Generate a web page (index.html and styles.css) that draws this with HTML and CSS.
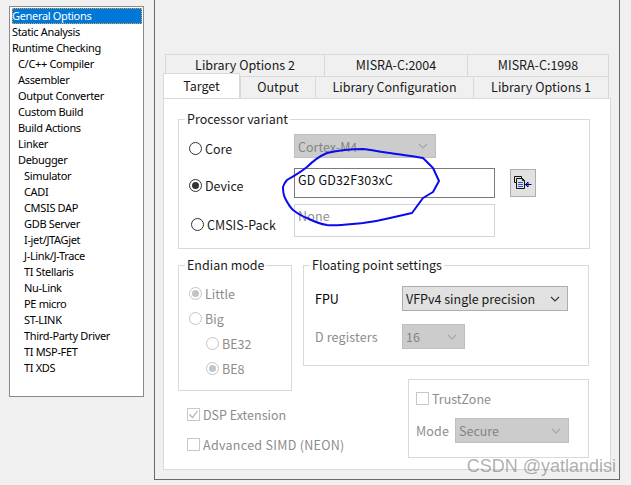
FILE: index.html
```html
<!DOCTYPE html>
<html lang="en">
<head>
<meta charset="utf-8">
<title>Options</title>
<link rel="stylesheet" href="styles.css">
</head>
<body>
<div class="app">
  <ul class="cats">
    <li class="cat sel"><span>General Options</span></li>
    <li class="cat">Static Analysis</li>
    <li class="cat">Runtime Checking</li>
    <li class="cat l1">C/C++ Compiler</li>
    <li class="cat l1">Assembler</li>
    <li class="cat l1">Output Converter</li>
    <li class="cat l1">Custom Build</li>
    <li class="cat l1">Build Actions</li>
    <li class="cat l1">Linker</li>
    <li class="cat l1">Debugger</li>
    <li class="cat l2">Simulator</li>
    <li class="cat l2">CADI</li>
    <li class="cat l2">CMSIS DAP</li>
    <li class="cat l2">GDB Server</li>
    <li class="cat l2">I-jet/JTAGjet</li>
    <li class="cat l2">J-Link/J-Trace</li>
    <li class="cat l2">TI Stellaris</li>
    <li class="cat l2">Nu-Link</li>
    <li class="cat l2">PE micro</li>
    <li class="cat l2">ST-LINK</li>
    <li class="cat l2">Third-Party Driver</li>
    <li class="cat l2">TI MSP-FET</li>
    <li class="cat l2">TI XDS</li>
  </ul>

  <main class="frame">
    <div class="tabs-back">
      <div class="tab t-lib2">Library Options 2</div>
      <div class="tab t-m04">MISRA-C:2004</div>
      <div class="tab t-m98">MISRA-C:1998</div>
    </div>
    <div class="tabs-front">
      <div class="tab active">Target</div>
      <div class="tab t-out">Output</div>
      <div class="tab t-cfg">Library Configuration</div>
      <div class="tab t-lib1">Library Options 1</div>
    </div>

    <section class="page">
      <fieldset class="group g-proc">
        <legend>Processor variant</legend>
        <div class="proc-grid">
          <label class="opt down2"><i class="radio"></i>Core</label>
          <div class="combo off c-core"><span>Cortex-M4</span><svg class="chev" viewBox="0 0 10 6"><path d="M1 1l4 4 4-4"/></svg></div>
          <span></span>
          <label class="opt down3"><i class="radio on"></i>Device</label>
          <div class="edit">GD GD32F303xC</div>
          <button class="pick" type="button">
            <svg class="pick-ico" width="18" height="14" viewBox="0 0 18 14">
              <path class="ink" d="M.5 .5h7v2M.5 .5v6h2M2.500 2.500h6l2 2v8h-8zM8.500 2.500v2h2"/>
              <path class="lines" d="M4 6.500h5M4 8.500h5M4 10.500h5"/>
              <path class="arrow" d="M11 8.500h6.500M11.500 8.500l2.500-2.500v5z"/>
            </svg>
          </button>
          <label class="opt down4 shift2"><i class="radio"></i>CMSIS-Pack</label>
          <div class="edit dim">None</div>
          <span></span>
        </div>
      </fieldset>

      <div class="lower">
        <div class="lower-left">
          <fieldset class="group g-endian">
            <legend>Endian mode</legend>
            <div class="radio-stack">
              <label class="opt off"><i class="radio on"></i>Little</label>
              <label class="opt off"><i class="radio"></i>Big</label>
              <label class="opt off sub"><i class="radio"></i>BE32</label>
              <label class="opt off sub"><i class="radio on"></i>BE8</label>
            </div>
          </fieldset>
          <div class="checks">
            <label class="check off"><i class="box"><svg width="11" height="11" viewBox="0 0 11 11"><path d="M1.500 5.500l3 3 5-6.500"/></svg></i>DSP Extension</label>
            <label class="check off wide"><i class="box"></i>Advanced SIMD (NEON)</label>
          </div>
        </div>
        <div class="lower-right">
          <fieldset class="group g-float">
            <legend>Floating point settings</legend>
            <div class="float-grid">
              <span class="lbl-fpu">FPU</span>
              <div class="combo c-fpu"><span>VFPv4 single precision</span><svg class="chev" viewBox="0 0 10 6"><path d="M1 1l4 4 4-4"/></svg></div>
              <span class="lbl-off">D registers</span>
              <div class="combo off c-dreg"><span>16</span><svg class="chev" viewBox="0 0 10 6"><path d="M1 1l4 4 4-4"/></svg></div>
            </div>
          </fieldset>
          <div class="tz">
            <label class="check off"><i class="box"></i>TrustZone</label>
            <div class="tz-mode">
              <span class="lbl-off">Mode</span>
              <div class="combo off c-mode"><span>Secure</span><svg class="chev" viewBox="0 0 10 6"><path d="M1 1l4 4 4-4"/></svg></div>
            </div>
          </div>
        </div>
      </div>
    </section>
  </main>
</div>

<svg class="scribble" width="631" height="485" viewBox="0 0 631 485">
  <path d="M307 167C314 160 320 156 327 153C340 150 352 149 363 149C372 150 381 152 390 153C402 155 413 156 423 158L433 168L439 181L433 192L423 198L412 213L390 218C382 220 372 222 363 223C350 224 338 226 327 225C320 224 313 221 307 218C301 216 297 213 293 210C289 206 287 202 285 198C283 194 283 190 283 187C284 184 285 182 287 180C294 176 301 172 307 167Z"/>
</svg>
<div class="mark">CSDN @yatlandisi</div>
</body>
</html>
```
FILE: styles.css
```css
html, body { margin: 0; padding: 0; }
body {
  width: 631px;
  height: 485px;
  overflow: hidden;
  background: #f0f0f0;
  color: #1a1a1a;
  font-family: "Noto Sans CJK SC", "Noto Sans", sans-serif;
  font-size: 12.500px;
  position: relative;
}
.app { display: flex; align-items: flex-start; padding-left: 9px; }

/* category list */
.cats {
  list-style: none;
  margin: 6px 10px 0 0;
  padding: 1px 1px 0 2px;
  width: 130px;
  height: 388px;
  background: #fff;
  border: 1px solid #8a8a8a;
  font-family: "Noto Sans", sans-serif;
  font-size: 11px;
  letter-spacing: -.33px;
  color: #000;
}
.cat { height: 16px; line-height: 16px; white-space: nowrap; }
.cat.sel { background: #0078d7; color: #fff; outline: 1px dotted #e8a040; outline-offset: -1px; }
.l1 { padding-left: 6px; }
.l2 { padding-left: 12px; }

/* outer frame */
.frame {
  flex: none;
  width: 456px;
  height: 425px;
  border: 1px solid #6a6a6a;
  border-top: 0;
  padding: 54px 0 0 8px;
}

/* tabs */
.tabs-back, .tabs-front { display: flex; height: 22px; }
.tabs-back { margin-left: 2px; }
.tab {
  box-sizing: border-box;
  text-align: center;
  line-height: 20px;
  background: #f0f0f0;
  border: 1px solid #d9d9d9;
  border-bottom: 0;
  margin-left: -1px;
  flex: none;
}
.tabs-back .tab:first-child { margin-left: 0; }
.t-lib2 { width: 160px; }
.t-m04 { width: 144px; }
.t-m98 { width: 142px; }
.tabs-front { position: relative; z-index: 1; }
.tabs-front .tab { height: 22px; }
.tabs-front .tab.active {
  width: 77px;
  height: 25px;
  margin: -3px 0 -1px;
  background: #fff;
  line-height: 23px;
  position: relative;
  z-index: 2;
}
.t-out { width: 76px; margin-left: 0; }
.t-cfg { width: 159px; }
.t-lib1 { width: 136px; }

/* white page */
.page {
  box-sizing: border-box;
  width: 448px;
  height: 372px;
  background: #fff;
  border: 1px solid #d9d9d9;
  padding: 11px 20px 0 14px;
}

.group {
  margin: 0;
  padding: 0;
  min-width: 0;
  border: 1px solid #d9d9d9;
  box-sizing: border-box;
}
.group legend {
  margin-left: 6px;
  padding: 0 2px;
  line-height: 18px;
  color: #1a1a1a;
}
.g-proc { height: 139px; }
.proc-grid {
  display: grid;
  grid-template-columns: 115px 201px 41px;
  grid-template-rows: 24px 30px 29px;
  row-gap: 10px;
  padding-top: 6px;
  align-items: stretch;
}
.proc-grid > :nth-child(n+7) { margin-top: -4px; }
.opt {
  display: flex;
  align-items: center;
  gap: 3px;
  padding-left: 10px;
}
.opt.off { color: #8c8c8c; }
.down2 { padding-top: 4px; }
.down3 { padding-top: 5px; }
.down4 { padding-top: 8px; }
.shift2 { padding-left: 12px; }

.radio {
  flex: none;
  box-sizing: border-box;
  width: 13px;
  height: 13px;
  border: 1px solid #333;
  border-radius: 50%;
  background: #fff;
  position: relative;
}
.radio.on::after {
  content: "";
  position: absolute;
  inset: 2px;
  border-radius: 50%;
  background: #333;
}
.off .radio { border-color: #c4c4c4; }
.off .radio.on::after { background: #c4c4c4; }

.combo {
  box-sizing: border-box;
  display: flex;
  align-items: center;
  justify-content: space-between;
  background: #e1e1e1;
  border: 1px solid #adadad;
  padding: 0 7px 0 3px;
}
.combo.off { background: #cccccc; border-color: #bfbfbf; color: #848484; }
.chev { width: 10px; height: 6px; flex: none; }
.chev path { fill: none; stroke: #333; stroke-width: 1.100; }
.combo.off .chev path { stroke: #a6a6a6; }
.c-core { width: 142px; }

.edit {
  box-sizing: border-box;
  border: 1px solid #7a7a7a;
  padding: 1px 3px;
  line-height: 20px;
  color: #111;
  letter-spacing: .15px;
}
.edit.dim { border-color: #d4d4d4; color: #8f8f8f; }

.pick {
  box-sizing: border-box;
  margin: 1px 0 1px 15px;
  width: 26px;
  height: 28px;
  padding: 0;
  background: #e1e1e1;
  border: 1px solid #adadad;
  display: flex;
  align-items: center;
  justify-content: center;
}
.pick-ico path { fill: none; stroke-width: 1; }
.pick-ico .ink { stroke: #111; }
.pick-ico .lines { stroke: #2a5ad0; }
.pick-ico .arrow { stroke: #000080; }

.lower {
  display: grid;
  grid-template-columns: 114px 286px;
  column-gap: 11px;
  margin-top: 7px;
}
.g-endian { height: 135px; }
.radio-stack { padding-top: 7px; display: grid; grid-auto-rows: 25px; }
.opt.sub { padding-left: 27px; }

.checks { padding: 8px 0 0 9px; display: grid; grid-auto-rows: 30px; }
.check {
  display: flex;
  align-items: center;
  gap: 3px;
  white-space: nowrap;
}
.check.off { color: #8c8c8c; }
.check.wide { letter-spacing: .3px; }
.box {
  box-sizing: border-box;
  flex: none;
  width: 13px;
  height: 13px;
  border: 1px solid #c8c8c8;
  background: #fff;
  display: flex;
}
.box path { fill: none; stroke: #b0b0b0; stroke-width: 1.200; }

.g-float { height: 110px; }
.float-grid {
  display: grid;
  grid-template-columns: 87px auto;
  grid-template-rows: 25px 25px;
  row-gap: 13px;
  justify-content: start;
  padding: 12px 0 0 11px;
  align-items: center;
}
.lbl-fpu { color: #000; }
.lbl-off { color: #8c8c8c; letter-spacing: .15px; }
.c-fpu { width: 166px; height: 25px; }
.c-dreg { width: 63px; height: 25px; }

.tz {
  box-sizing: border-box;
  margin: 13px 0 0 105px;
  width: 181px;
  height: 79px;
  border: 1px solid #d9d9d9;
  padding: 12px 0 0 7px;
}
.tz .check { height: 13px; }
.tz-mode { display: flex; align-items: center; margin-top: 13px; gap: 5px; }
.tz-mode .lbl-off { width: 34px; }
.c-mode { width: 114px; height: 25px; }

/* overlays: hand-drawn ink and image watermark */
.scribble { position: absolute; left: 0; top: 0; pointer-events: none; }
.scribble path { fill: none; stroke: #0a0aee; stroke-width: 2; stroke-linejoin: round; }
.mark {
  position: absolute;
  right: 15px;
  bottom: 9px;
  font-family: "Liberation Sans", sans-serif;
  font-size: 18px;
  line-height: 20px;
  color: rgba(110, 110, 110, .55);
  white-space: nowrap;
}
```
